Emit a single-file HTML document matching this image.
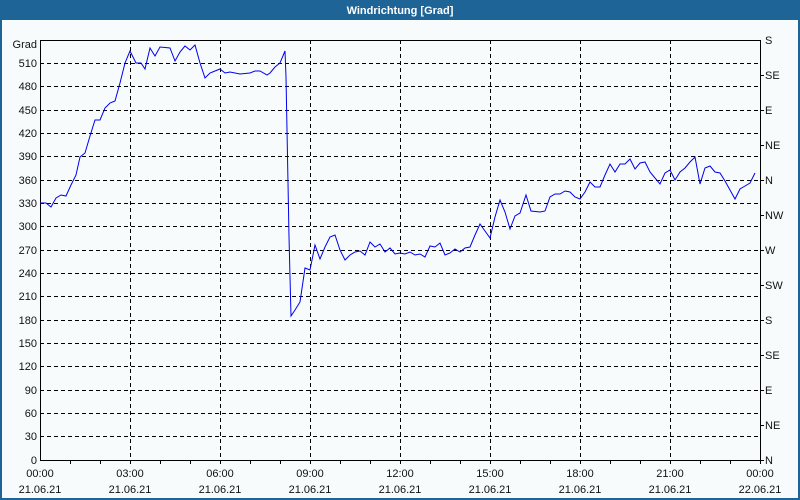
<!DOCTYPE html>
<html><head><meta charset="utf-8"><style>
html,body{margin:0;padding:0;background:#fff}
svg{display:block}
text{font-family:"Liberation Sans",sans-serif;font-size:11px;fill:#111}
</style></head><body>
<svg width="800" height="500" xmlns="http://www.w3.org/2000/svg">
<rect x="0" y="0" width="800" height="500" fill="#1f6496"/>
<rect x="2" y="20" width="796" height="478" fill="#f8fbfc"/>
<text x="400" y="14" text-anchor="middle" style="fill:#fff;font-weight:bold;font-size:11px">Windrichtung [Grad]</text>
<g stroke="#000" stroke-width="1" stroke-dasharray="4,3" fill="none">
<path d="M40 63.5H760M40 86.5H760M40 110.5H760M40 133.5H760M40 156.5H760M40 180.5H760M40 203.5H760M40 226.5H760M40 250.5H760M40 273.5H760M40 296.5H760M40 320.5H760M40 343.5H760M40 366.5H760M40 390.5H760M40 413.5H760M40 436.5H760"/>
<path d="M130.5 40V460M220.5 40V460M310.5 40V460M400.5 40V460M490.5 40V460M580.5 40V460M670.5 40V460"/>
</g>
<g stroke="#000" stroke-width="1" fill="none">
<path d="M40.5 40V460.5H760.5V40M40 40.5H760"/>
<path d="M70.5 460v4M100.5 460v4M130.5 460v4M160.5 460v4M190.5 460v4M220.5 460v4M250.5 460v4M280.5 460v4M310.5 460v4M340.5 460v4M370.5 460v4M400.5 460v4M430.5 460v4M460.5 460v4M490.5 460v4M520.5 460v4M550.5 460v4M580.5 460v4M610.5 460v4M640.5 460v4M670.5 460v4M700.5 460v4M730.5 460v4M760.5 460v4"/>
<path d="M760 75.5h4M760 110.5h4M760 145.5h4M760 180.5h4M760 215.5h4M760 250.5h4M760 285.5h4M760 320.5h4M760 355.5h4M760 390.5h4M760 425.5h4M760 460.5h4"/>
</g>
<g text-anchor="end">
<text x="37" y="48">Grad</text>
<text x="37" y="67">510</text><text x="37" y="90">480</text><text x="37" y="114">450</text><text x="37" y="137">420</text><text x="37" y="160">390</text><text x="37" y="184">360</text><text x="37" y="207">330</text><text x="37" y="230">300</text><text x="37" y="254">270</text><text x="37" y="277">240</text><text x="37" y="300">210</text><text x="37" y="324">180</text><text x="37" y="347">150</text><text x="37" y="370">120</text><text x="37" y="394">90</text><text x="37" y="417">60</text><text x="37" y="440">30</text><text x="37" y="464">0</text>
</g>
<g>
<text x="765" y="44">S</text><text x="765" y="79">SE</text><text x="765" y="114">E</text><text x="765" y="149">NE</text><text x="765" y="184">N</text><text x="765" y="219">NW</text><text x="765" y="254">W</text><text x="765" y="289">SW</text><text x="765" y="324">S</text><text x="765" y="359">SE</text><text x="765" y="394">E</text><text x="765" y="429">NE</text><text x="765" y="464">N</text>
</g>
<g text-anchor="middle">
<text x="40" y="477">00:00</text><text x="130" y="477">03:00</text><text x="220" y="477">06:00</text><text x="310" y="477">09:00</text><text x="400" y="477">12:00</text><text x="490" y="477">15:00</text><text x="580" y="477">18:00</text><text x="670" y="477">21:00</text><text x="760" y="477">00:00</text>
<text x="40" y="493">21.06.21</text><text x="130" y="493">21.06.21</text><text x="220" y="493">21.06.21</text><text x="310" y="493">21.06.21</text><text x="400" y="493">21.06.21</text><text x="490" y="493">21.06.21</text><text x="580" y="493">21.06.21</text><text x="670" y="493">21.06.21</text><text x="760" y="493">22.06.21</text>
</g>
<polyline fill="none" stroke="#0000ee" stroke-width="1" points="40,203 46,203 51,207 56,198 61,195 66,196 71,185 76,175 80,157 85,153 90,136 95,120 100,120 105,108 110,103 115,101 120,83 125,63 130,51 136,63 141,63 145,69 150,48 155,56 160,47 170,48 175,61 180,52 185,46 190,50 195,45 200,63 205,78 210,73 215,71 220,69 225,73 230,72 240,74 250,73 255,71 260,71 267,75 270,73 275,67 280,63 285,51 286,77 287,130 288,183 289,237 291,316 295,310 300,302 305,268 310,270 315,245 320,259 325,247 330,237 335,235 340,250 345,260 350,255 355,252 360,251 365,255 370,242 375,247 380,244 385,252 390,248 395,254 400,253 405,254 410,252 415,255 420,254 425,257 430,246 435,247 440,243 445,255 450,253 455,249 460,252 465,248 470,247 475,235 480,224 485,231 490,238 495,217 500,200 505,212 510,229 515,216 520,213 526,195 531,211 540,212 545,211 550,197 555,194 560,194 565,191 570,192 575,197 580,199 585,192 590,182 595,187 600,187 605,175 610,164 615,172 620,164 625,164 630,159 635,169 640,163 645,162 650,172 655,178 660,184 665,173 670,170 675,180 680,172 685,168 690,162 695,157 700,184 705,168 710,166 715,172 720,173 725,181 730,190 735,199 740,189 745,186 750,183 755,173"/>
</svg>
</body></html>
